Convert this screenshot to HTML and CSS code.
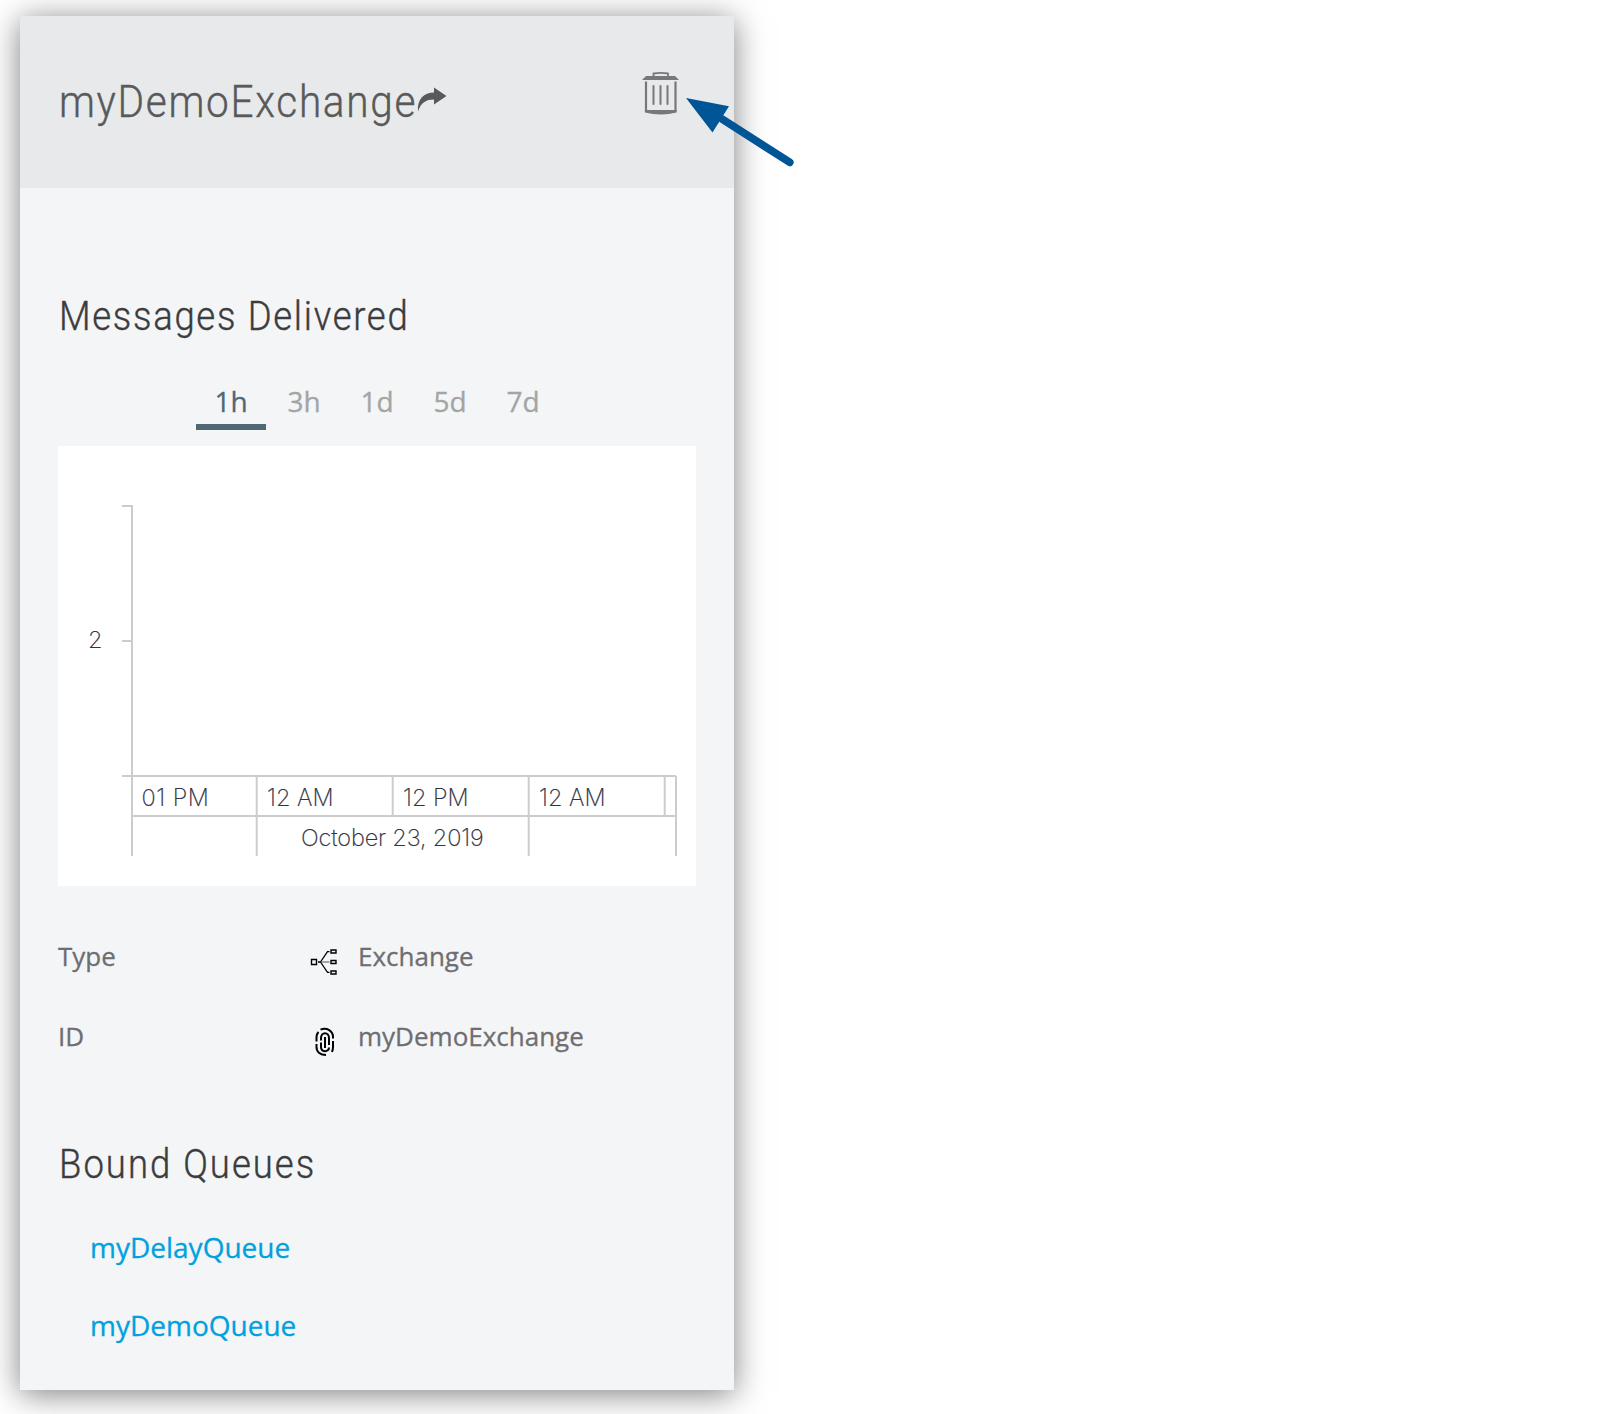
FILE: index.html
```html
<!DOCTYPE html>
<html lang="en">
<head>
<meta charset="utf-8">
<title>myDemoExchange</title>
<link rel="stylesheet" href="styles.css">
</head>
<body>
<aside class="panel">
  <header class="panel-header">
    <h1 class="title"><span class="narrow">myDemoExchange</span><svg class="share" width="30" height="26" viewBox="0 0 30 26"><path d="M1 24.500C0 12 7 5.500 17 5.500V0.500L29.500 9 17 17.500V12.500C9 12.500 4 15.500 1 24.500Z" fill="#58595b"/></svg></h1>
    <svg class="trash" width="38" height="44" viewBox="0 0 38 44">
      <path d="M11.500 5V1.500Q19 0.300 26 1.500V5" fill="none" stroke="#77787a" stroke-width="1.800"/>
      <path d="M4 4H33L37 8H0Z" fill="#77787a"/>
      <path d="M4 9.500V39.500M33.500 9.500V39.500" stroke="#77787a" stroke-width="2.200"/>
      <path d="M2.900 38H34.600V40.600Q19 44.500 2.900 40.600Z" fill="#77787a"/>
      <path d="M11.500 14V32M18.500 14V32M25.500 14V32" stroke="#77787a" stroke-width="2" stroke-linecap="round"/>
    </svg>
  </header>
  <section class="delivered">
    <h2 class="heading"><span class="narrow">Messages Delivered</span></h2>
    <nav class="tabs">
      <a class="tab active">1h</a>
      <a class="tab">3h</a>
      <a class="tab">1d</a>
      <a class="tab">5d</a>
      <a class="tab">7d</a>
    </nav>
    <div class="chart">
      <svg width="638" height="440" viewBox="58 446 638 440">
        <g class="axis">
          <path d="M122 506H132V856M122 641H132M122 776H676M132 816H676M676 776V856"/>
          <path d="M256.700 776V856M392.700 776V816M528.700 776V856M664.700 776V816"/>
        </g>
        <g class="labels">
          <text x="88" y="648">2</text>
          <text class="first" x="141.500" y="806">01 PM</text>
          <text x="267" y="806">12 AM</text>
          <text x="403" y="806">12 PM</text>
          <text x="539" y="806">12 AM</text>
          <text class="date" x="301" y="846">October 23, 2019</text>
        </g>
      </svg>
    </div>
  </section>
  <dl class="details">
    <div class="row">
      <dt>Type</dt>
      <dd><svg class="icon" width="30" height="30" viewBox="0 0 30 30" fill="none" stroke="#000"><path d="M2.500 12.500H7.500V17.500H2.500ZM22 3H27V6H22ZM22 13.500H27V16.500H22ZM22 24H27V27H22Z" stroke-width="1.400"/><path d="M9 15H11.500M11.500 15L18.500 4.700H20.500M11.500 15L18.500 25.300H20.500" stroke-width="1.300"/><path d="M12 15H20.500" stroke-width="1" stroke="#555"/></svg><span>Exchange</span></dd>
    </div>
    <div class="row">
      <dt>ID</dt>
      <dd><svg class="icon" width="30" height="30" viewBox="0 0 30 30" fill="none" stroke="#000" stroke-width="2"><path d="M11.500 2.600C18 0 24 4 24 10V11.500M24 14V20Q24 22.500 23 25M7.500 14.500V10Q7.500 7 9.500 5M7.500 17V20C7.500 25 11.500 28 17 28M20 18V11C20 4.500 12 4.500 12 11V13.500M12 15.500V20C12 25.500 20 25.500 20 20.500M16 10V21"/></svg><span>myDemoExchange</span></dd>
    </div>
  </dl>
  <section class="queues">
    <h2 class="heading"><span class="narrow">Bound Queues</span></h2>
    <ul>
      <li><a>myDelayQueue</a></li>
      <li><a>myDemoQueue</a></li>
    </ul>
  </section>
</aside>
<svg class="pointer" width="112" height="72" viewBox="684 96 112 72"><path d="M722 119L789.700 162.300" stroke="#005596" stroke-width="7.800" stroke-linecap="round"/><path d="M686 98L729 106.300 712.500 132.500Z" fill="#005596"/></svg>
</body>
</html>
```

FILE: styles.css
```css
* { box-sizing: border-box; }

body {
  margin: 0;
  width: 1604px;
  height: 1414px;
  overflow: hidden;
  background: #fff;
  font-family: "Open Sans", sans-serif;
}

h1, h2, ul, dl, dt, dd { margin: 0; padding: 0; }

.panel {
  width: 714px;
  height: 1374px;
  margin: 16px 0 0 20px;
  background: #f4f5f7;
  box-shadow: 0 4px 30px rgba(0, 0, 0, 0.5);
}

.panel-header {
  display: flex;
  justify-content: space-between;
  align-items: flex-start;
  height: 172px;
  padding: 56px 54px 0 38.5px;
  background: #e8e9eb;
}

.title {
  display: flex;
  align-items: flex-start;
  font: 300 45px/59px Roboto, sans-serif;
  letter-spacing: 1.9px;
  color: #58595b;
}

/* The headings are set slightly condensed. */
.narrow {
  display: inline-block;
  transform: scaleX(0.9);
  transform-origin: left;
  -webkit-text-stroke: 0.4px currentColor;
}

.share { margin: 15px 0 0 -39px; }

.delivered { padding: 99px 38px 0; }

.heading {
  padding-left: 0.8px;
  font: 300 40.5px/58px Roboto, sans-serif;
  letter-spacing: 1.9px;
  color: #3b3c3e;
}

.tabs {
  display: flex;
  justify-content: center;
  gap: 3px;
  height: 56px;
  margin: 29px 0 16px;
}

.tab {
  width: 70px;
  height: 56px;
  font-size: 28px;
  line-height: 54px;
  text-align: center;
  color: #a3a5a5;
  -webkit-text-stroke: 0.3px currentColor;
}

.tab.active {
  color: #506872;
  border-bottom: 6px solid #506872;
}

.chart {
  height: 440px;
  background: #fff;
}

.chart svg { display: block; }

.axis path {
  fill: none;
  stroke: #ccc;
  stroke-width: 2;
}

.labels {
  font: 200 23.5px Inter, sans-serif;
  fill: #333344;
  stroke: #333344;
  stroke-width: 0.2px;
}

.labels .first { letter-spacing: 0.5px; }

.labels .date { letter-spacing: -0.15px; }

.details { padding: 30px 38px 0; }

.row {
  display: flex;
  height: 80px;
  font-size: 26px;
  line-height: 80px;
  color: #6d6e71;
  -webkit-text-stroke: 0.3px currentColor;
}

.row dt { width: 251px; }

.row dd {
  display: flex;
  align-items: center;
  gap: 19px;
}

.icon { margin-top: 12px; }

.queues { padding: 59px 38px 0; }

.queues .heading { letter-spacing: 2.25px; }

.queues ul {
  padding: 15px 0 0 32px;
  list-style: none;
}

.queues li {
  height: 78px;
  font-size: 28px;
  line-height: 78px;
  color: #00a1de;
  -webkit-text-stroke: 0.3px currentColor;
}

.pointer {
  position: absolute;
  left: 684px;
  top: 96px;
}
```
